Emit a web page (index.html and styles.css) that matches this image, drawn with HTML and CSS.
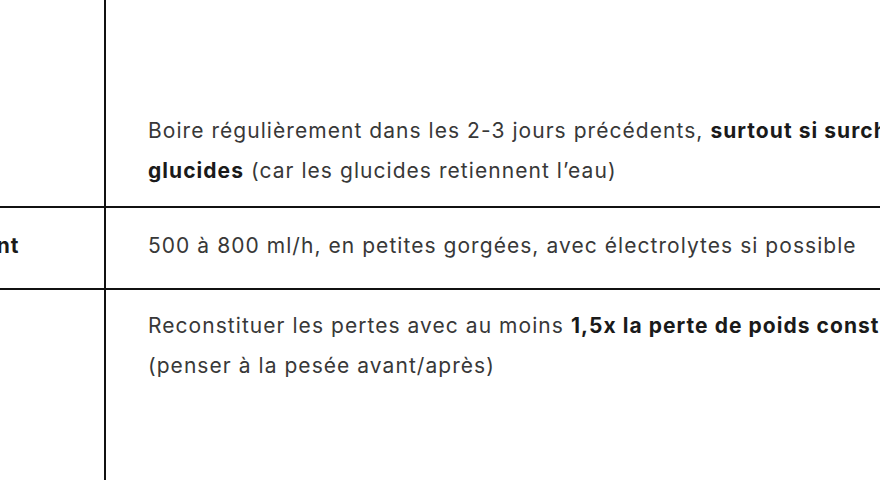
FILE: index.html
```html
<!DOCTYPE html>
<html lang="fr">
<head>
<meta charset="utf-8">
<title>Hydratation</title>
<link rel="stylesheet" href="styles.css">
</head>
<body>
<div class="frame">
<table class="plan">
  <tbody>
    <tr class="row-before">
      <td class="phase">Avant</td>
      <td class="advice">Boire régulièrement dans les 2-3 jours précédents, <strong>surtout si surcharge en glucides</strong> (car les glucides retiennent l’eau)</td>
    </tr>
    <tr class="row-during">
      <td class="phase">Pendant</td>
      <td class="advice">500 à 800 ml/h, en petites gorgées, avec électrolytes si possible</td>
    </tr>
    <tr class="row-after">
      <td class="phase">Après</td>
      <td class="advice">Reconstituer les pertes avec au moins <strong>1,5x la perte de poids constatée</strong> (penser à la pesée avant/après)</td>
    </tr>
  </tbody>
</table>
</div>
</body>
</html>
```

FILE: styles.css
```css
html, body {
  margin: 0;
  padding: 0;
  background: #ffffff;
  overflow: hidden;
}

body {
  font-family: Inter, "Noto Sans", "Liberation Sans", sans-serif;
  font-size: 21px;
  letter-spacing: 1.05px;
  line-height: 40px;
  color: #383838;
}

.frame {
  width: 1400px;
  margin-left: -117px;
  margin-top: -92px;
}

.plan {
  border-collapse: collapse;
}

.plan td {
  border: 2px solid #111111;
  vertical-align: top;
  padding: 16px 42px 18px;
}

.plan strong {
  font-weight: 700;
  color: #1a1a1a;
}

.phase {
  width: 135px;
  font-weight: 700;
  color: #1a1a1a;
}

.advice {
  width: 840px;
}

.row-before td {
  vertical-align: bottom;
  height: 265px;
  padding-bottom: 15px;
}

.row-during td {
  padding-top: 18px;
  padding-bottom: 22px;
}

.row-after td {
  padding-top: 16px;
  height: 300px;
}
```
